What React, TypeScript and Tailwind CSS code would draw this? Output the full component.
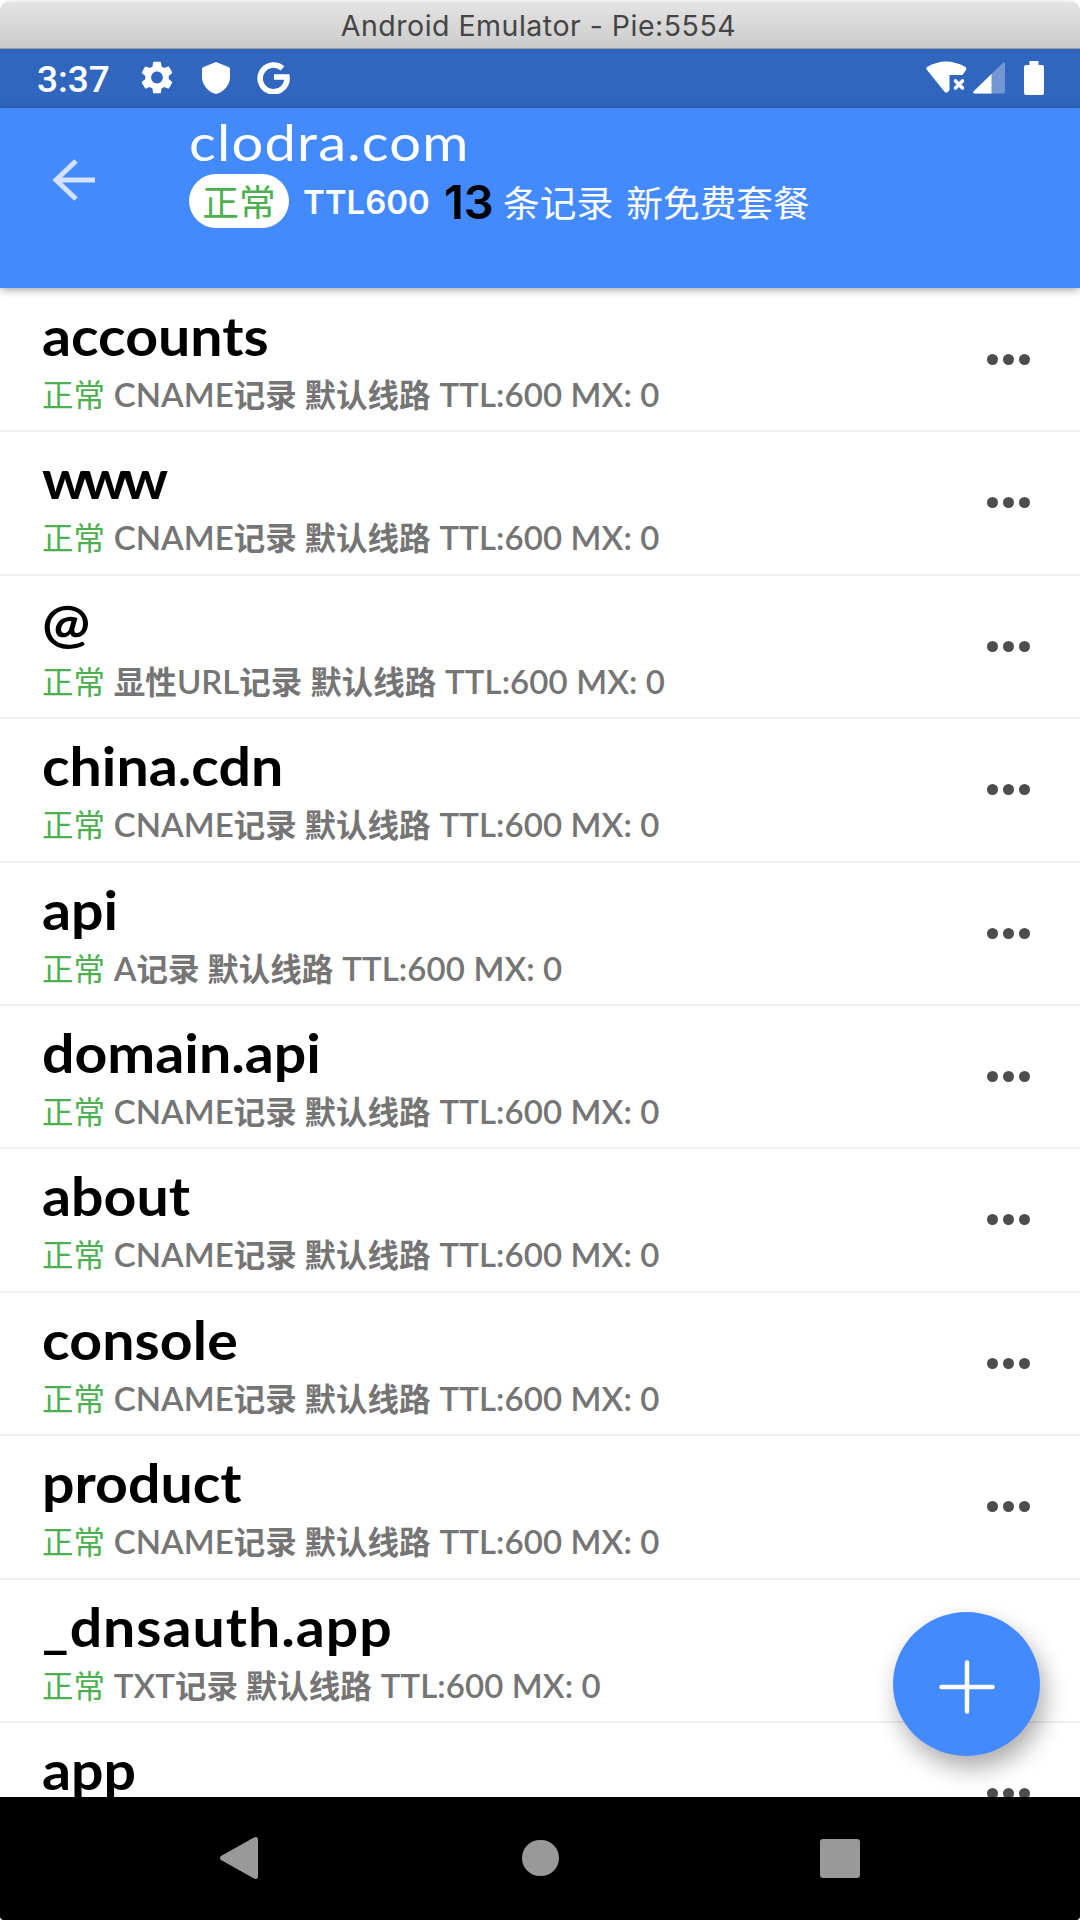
type DnsRecord = {
    name: string;
    kind?: string;
    prefix?: string;
    spacing?: string;
};

const records: DnsRecord[] = [
    { name: "accounts", kind: "CNAME" },
    { name: "www", kind: "CNAME", spacing: "tracking-[-5.5px]" },
    { name: "@", prefix: "显性", kind: "URL" },
    { name: "china.cdn", kind: "CNAME" },
    { name: "api", kind: "A" },
    { name: "domain.api", kind: "CNAME" },
    { name: "about", kind: "CNAME" },
    { name: "console", kind: "CNAME", spacing: "tracking-[0.1px]" },
    { name: "product", kind: "CNAME" },
    { name: "_dnsauth.app", kind: "TXT", spacing: "tracking-[0.9px]" },
    { name: "app" },
];

function TitleBar() {
    return (
        <div className="h-[49px] shrink-0 bg-white">
            <div className="h-full rounded-t-[10px] border-b border-[#9c9c9c] border-t-2 border-t-[#f2f2f2] bg-linear-to-b from-[#e4e4e4] to-[#cbcbcb] pr-[3px] text-center font-[Inter] text-[28.5px] leading-[47px] tracking-[0.5px] text-[#454545]">
                Android Emulator - Pie:5554
            </div>
        </div>
    );
}

function StatusBar() {
    return (
        <div className="flex h-[59px] shrink-0 items-center bg-[#3166bf] pb-[2px] pl-[37px] text-white">
            <span className="w-[104px] pt-[3px] font-[Roboto] text-[37px] font-medium leading-none">3:37</span>
            <svg className="w-[32px] h-[33px]" viewBox="2.2 2 19.6 20" preserveAspectRatio="none" fill="currentColor">
                <path d="M19.14 12.94c.04-.3.06-.61.06-.94 0-.32-.02-.64-.07-.94l2.03-1.58c.18-.14.23-.41.12-.61l-1.92-3.32c-.12-.22-.37-.29-.59-.22l-2.39.96c-.5-.38-1.03-.7-1.62-.94l-.36-2.54c-.04-.24-.24-.41-.48-.41h-3.84c-.24 0-.43.17-.47.41l-.36 2.54c-.59.24-1.13.57-1.62.94l-2.39-.96c-.22-.08-.47 0-.59.22L2.74 8.87c-.12.21-.08.47.12.61l2.03 1.58c-.05.3-.09.63-.09.94s.02.64.07.94l-2.03 1.58c-.18.14-.23.41-.12.61l1.92 3.32c.12.22.37.29.59.22l2.39-.96c.5.38 1.03.7 1.62.94l.36 2.54c.05.24.24.41.48.41h3.84c.24 0 .44-.17.47-.41l.36-2.54c.59-.24 1.13-.56 1.62-.94l2.39.96c.22.08.47 0 .59-.22l1.92-3.32c.12-.22.07-.47-.12-.61l-2.01-1.58zM12 15.6c-1.98 0-3.6-1.62-3.6-3.6s1.62-3.6 3.6-3.6 3.6 1.62 3.6 3.6-1.62 3.6-3.6 3.6z" />
            </svg>
            <svg className="ml-[29px] w-[28px] h-[32px]" viewBox="0 0 28 32" fill="currentColor">
                <path d="M14 0 26.5 5Q28 5.600 28 7V15C28 23 22 30 14 32 6 30 0 23 0 15V7Q0 5.600 1.500 5Z" />
            </svg>
            <svg className="ml-[27px] w-[33px] h-[33px]" viewBox="0 0 33 33" fill="none" stroke="currentColor" strokeWidth="5.600">
                <path d="M25.500 7.400A13.400 13.400 0 1 0 29.900 16H17" />
            </svg>
            <svg className="ml-auto w-[41px] h-[33px]" viewBox="0 0 41 33" fill="currentColor">
                <path d="M1 9Q-.5 7.500 1 6Q20 -5 39.500 6Q41 7.500 40 9L36.500 14H23.500V29Q20.500 34 17.500 29.500Z" />
                <path d="m29.500 20 7 7m0-7-7 7" stroke="currentColor" strokeWidth="3.600" strokeLinecap="round" />
            </svg>
            <svg className="ml-[6px] w-[32px] h-[32px]" viewBox="0 0 32 32" fill="currentColor">
                <path d="M30 .8Q32 0 32 2V29.500Q32 31.500 30 31.500H2Q-1 31.500 1 29Z" opacity="0.32" />
                <path d="M18.500 12V31.500H2Q-1 31.500 1 29Z" />
            </svg>
            <svg className="ml-[19px] mr-[36px] w-[20px] h-[34px]" viewBox="0 0 20 34" fill="currentColor">
                <path d="M5.500 0H14.500V4H18Q20 4 20 6V32Q20 34 18 34H2Q0 34 0 32V6Q0 4 2 4H5.500Z" />
            </svg>
        </div>
    );
}

function Header() {
    return (
        <header className="z-10 flex h-[180px] shrink-0 bg-[#448aff] shadow-[0_2px_8px_rgba(0,0,0,0.35)]">
            <svg className="ml-[52px] mt-[51px] w-[43px] h-[42px]" viewBox="0 0 43 42" fill="none" stroke="#d2e2ff" strokeWidth="5">
                <path d="M43 21H4M24 2 4 21 24 40" />
            </svg>
            <div className="ml-[94px]">
                <h1 className="h-[66px] origin-left scale-x-110 font-[Lato] text-[51px] leading-[67px] tracking-[1.1px] text-white">
                    clodra.com
                </h1>
                <div className="flex h-[54px] items-center whitespace-nowrap text-white">
                    <span className="h-[54px] w-[100px] rounded-full bg-white text-center font-['Noto_Sans_CJK_SC',sans-serif] text-[36.7px] leading-[53px] text-[#4caf50]">
                        正常
                    </span>
                    <span className="ml-[14px] w-[141px] pt-[2px] font-[Inter] text-[33px] font-semibold leading-[56px]">TTL600</span>
                    <span className="w-[59px] pt-[2px] font-[Inter] text-[47px] font-semibold leading-[56px] text-black">13</span>
                    <span className="font-['Noto_Sans_CJK_SC',sans-serif] text-[36.7px] leading-[52px] [word-spacing:5px]">条记录 新免费套餐</span>
                </div>
            </div>
        </header>
    );
}

function MoreButton() {
    return (
        <button className="mr-[50px] mt-[65px] flex h-[11px] gap-[5px]">
            {[0, 1, 2].map((dot) => (
                <i key={dot} className="size-[11px] rounded-full bg-[#4d4d4d]" />
            ))}
        </button>
    );
}

function RecordRow({ record }: { record: DnsRecord }) {
    return (
        <div className="flex h-[143.4px] shrink-0 justify-between border-b-2 border-[#efefef]">
            <div className="pl-[42px] pt-[15px]">
                <div className={`h-[62px] origin-left scale-x-[1.06] font-[Lato] text-[54px] font-bold leading-[64px] text-black ${record.spacing ?? ""}`}>
                    {record.name}
                </div>
                {record.kind && (
                    <div className="h-[46px] whitespace-nowrap font-[Lato,'Noto_Sans_CJK_SC',sans-serif] text-[31.5px] font-semibold leading-[56px] text-[#757575]">
                        <span className="mr-[1px] font-normal text-[#4caf50]">正常</span> {record.prefix}
                        <span className="text-[33px]">{record.kind}</span>
                        记录 <span className="mr-[1px]">默认线路</span> <span className="text-[33px] tracking-[0.1px]">TTL:600 MX: 0</span>
                    </div>
                )}
            </div>
            <MoreButton />
        </div>
    );
}

function NavBar() {
    return (
        <nav className="h-[123px] shrink-0 bg-white">
            <div className="flex h-full items-center rounded-b-[4px] bg-black pb-[1px] text-[#999999]">
                <svg className="ml-[220px] w-[38px] h-[42px]" viewBox="0 0 38 42" fill="currentColor">
                    <path d="M1 19 34 .5Q38-1 38 3V39Q38 43 34 41.500L1 23Q-1 21 1 19Z" />
                </svg>
                <i className="ml-[264px] h-[36px] w-[37px] rounded-full bg-current" />
                <i className="ml-[261px] h-[39px] w-[40px] rounded-[3px] bg-current" />
            </div>
        </nav>
    );
}

export default function App() {
    return (
        <div className="relative flex h-[1920px] w-[1080px] flex-col overflow-hidden bg-white">
            <TitleBar />
            <StatusBar />
            <Header />
            <main className="flex min-h-0 flex-1 flex-col overflow-hidden pt-px">
                {records.map((record) => (
                    <RecordRow key={record.name} record={record} />
                ))}
            </main>
            <button className="absolute left-[893px] top-[1612px] flex h-[144px] w-[147px] items-center justify-center rounded-[50%] bg-[#448aff] shadow-[5px_12px_24px_rgba(0,0,0,0.33)]">
                <svg className="mt-[6px] w-[56px] h-[54px]" viewBox="0 0 56 54" stroke="white" strokeWidth="4.500" strokeLinecap="round">
                    <path d="M28 2.500V51.500M2.500 27H53.500" />
                </svg>
            </button>
            <NavBar />
        </div>
    );
}
